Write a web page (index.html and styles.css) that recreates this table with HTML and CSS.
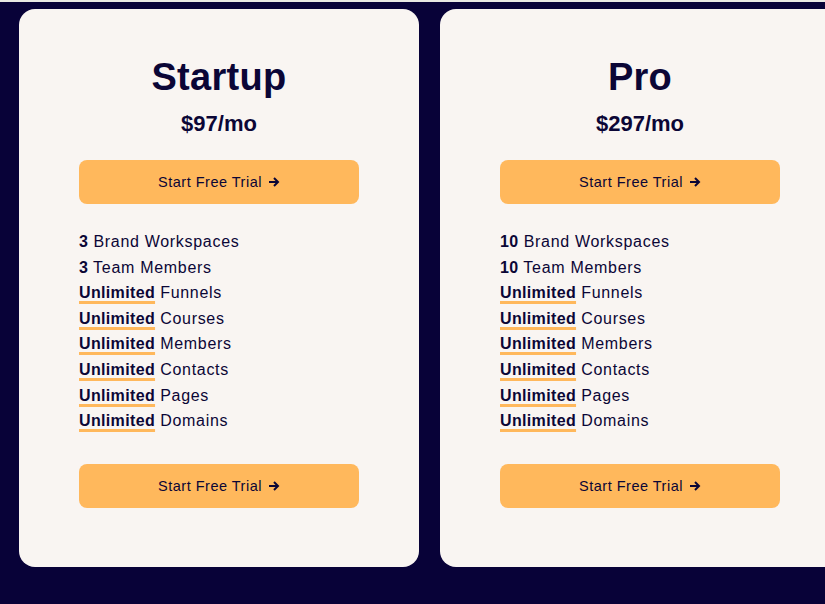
FILE: index.html
```html
<!DOCTYPE html>
<html>
<head>
<meta charset="utf-8">
<link rel="stylesheet" href="styles.css">
</head>
<body>
<div class="topline"></div>
<div class="plans">
  <section class="card">
    <h2 class="name">Startup</h2>
    <div class="price">$97/mo</div>
    <a class="btn" href="#">Start Free Trial <svg class="arrow" viewBox="0 0 12 12" width="12" height="12"><path d="M1 6h9M6 2l4 4-4 4" fill="none" stroke="currentColor" stroke-width="2"/></svg></a>
    <ul class="features">
      <li><b>3</b> Brand Workspaces</li>
      <li><b>3</b> Team Members</li>
      <li><b class="u">Unlimited</b> Funnels</li>
      <li><b class="u">Unlimited</b> Courses</li>
      <li><b class="u">Unlimited</b> Members</li>
      <li><b class="u">Unlimited</b> Contacts</li>
      <li><b class="u">Unlimited</b> Pages</li>
      <li><b class="u">Unlimited</b> Domains</li>
    </ul>
    <a class="btn" href="#">Start Free Trial <svg class="arrow" viewBox="0 0 12 12" width="12" height="12"><path d="M1 6h9M6 2l4 4-4 4" fill="none" stroke="currentColor" stroke-width="2"/></svg></a>
  </section>
  <section class="card">
    <h2 class="name">Pro</h2>
    <div class="price">$297/mo</div>
    <a class="btn" href="#">Start Free Trial <svg class="arrow" viewBox="0 0 12 12" width="12" height="12"><path d="M1 6h9M6 2l4 4-4 4" fill="none" stroke="currentColor" stroke-width="2"/></svg></a>
    <ul class="features">
      <li><b>10</b> Brand Workspaces</li>
      <li><b>10</b> Team Members</li>
      <li><b class="u">Unlimited</b> Funnels</li>
      <li><b class="u">Unlimited</b> Courses</li>
      <li><b class="u">Unlimited</b> Members</li>
      <li><b class="u">Unlimited</b> Contacts</li>
      <li><b class="u">Unlimited</b> Pages</li>
      <li><b class="u">Unlimited</b> Domains</li>
    </ul>
    <a class="btn" href="#">Start Free Trial <svg class="arrow" viewBox="0 0 12 12" width="12" height="12"><path d="M1 6h9M6 2l4 4-4 4" fill="none" stroke="currentColor" stroke-width="2"/></svg></a>
  </section>
</div>
</body>
</html>
```
FILE: styles.css
```css
html, body {
  margin: 0;
  padding: 0;
}
body {
  background: #080238;
  font-family: "Liberation Sans", Arial, sans-serif;
  color: #0b0636;
  width: 825px;
  height: 604px;
  overflow: hidden;
}
.topline {
  height: 2px;
  background: #e9e9e4;
}
.plans {
  display: flex;
  gap: 21px;
  padding: 7px 0 0 19px;
}
.card {
  flex: 0 0 400px;
  box-sizing: border-box;
  height: 558px;
  background: #f9f5f2;
  border-radius: 16px;
  padding: 46px 60px 0;
  display: flex;
  flex-direction: column;
}
.name {
  margin: 0;
  font-size: 38px;
  line-height: 1.2;
  font-weight: 700;
  text-align: center;
  letter-spacing: 0.3px;
}
.price {
  margin-top: 10px;
  font-size: 22px;
  line-height: 1.2;
  font-weight: 700;
  text-align: center;
}
.btn {
  margin-top: 23px;
  height: 44px;
  border-radius: 8px;
  background: #ffb85c;
  color: #0b0636;
  text-decoration: none;
  font-size: 14.5px;
  letter-spacing: 0.5px;
  display: flex;
  align-items: center;
  justify-content: center;
  gap: 6px;
}
.arrow {
  display: block;
}
.features {
  list-style: none;
  margin: 25px 0 30px;
  padding: 0;
  font-size: 16px;
  line-height: 25.6px;
  letter-spacing: 0.7px;
}
.features + .btn {
  margin-top: 0;
}
.features b {
  font-weight: 700;
  letter-spacing: 0.35px;
}
.u {
  text-decoration: underline;
  text-decoration-color: #ffb85c;
  text-decoration-thickness: 3px;
  text-underline-offset: 3px;
}
```
